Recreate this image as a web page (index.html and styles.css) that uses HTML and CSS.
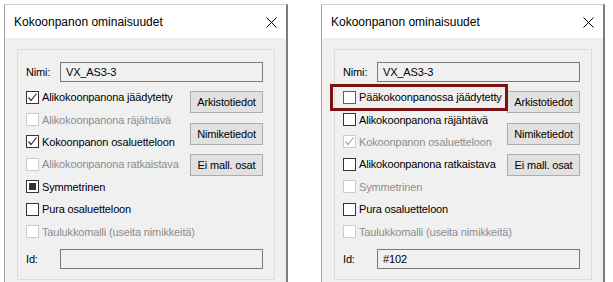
FILE: index.html
```html
<!DOCTYPE html>
<html lang="fi">
<head>
    <meta charset="UTF-8">
    <title>Kokoonpanon ominaisuudet</title>
    <link rel="stylesheet" href="styles.css">
</head>
<body>
    <div class="dialog">
        <div class="titlebar">
            <span class="title">Kokoonpanon ominaisuudet</span>
            <svg class="close" width="11" height="11" viewBox="0 0 11 11"><path d="M0.5 0.5 L10.5 10.5 M10.5 0.5 L0.5 10.5" stroke="#000" stroke-width="1"/></svg>
        </div>
        <div class="dialog-body">
            <div class="group">
                <div class="field-row">
                    <span class="field-label">Nimi:</span>
                    <div class="field">VX_AS3-3</div>
                </div>
                <div class="main">
                    <div class="checks">
                        <div class="check-row"><span class="box checked"><svg width="11" height="11" viewBox="0 0 11 11"><path d="M1.5 5.5 L4 8.5 L9.5 1.5" fill="none" stroke="#333" stroke-width="1.2"/></svg></span>Alikokoonpanona jäädytetty</div>
                        <div class="check-row disabled"><span class="box"></span>Alikokoonpanona räjähtävä</div>
                        <div class="check-row"><span class="box checked"><svg width="11" height="11" viewBox="0 0 11 11"><path d="M1.5 5.5 L4 8.5 L9.5 1.5" fill="none" stroke="#333" stroke-width="1.2"/></svg></span>Kokoonpanon osaluetteloon</div>
                        <div class="check-row disabled"><span class="box"></span>Alikokoonpanona ratkaistava</div>
                        <div class="check-row"><span class="box mixed"><span class="fill"></span></span>Symmetrinen</div>
                        <div class="check-row"><span class="box"></span>Pura osaluetteloon</div>
                        <div class="check-row disabled"><span class="box"></span>Taulukkomalli (useita nimikkeitä)</div>
                    </div>
                    <div class="buttons">
                        <div class="btn">Arkistotiedot</div>
                        <div class="btn">Nimiketiedot</div>
                        <div class="btn">Ei mall. osat</div>
                    </div>
                </div>
                <div class="field-row id-row">
                    <span class="field-label">Id:</span>
                    <div class="field"></div>
                </div>
            </div>
        </div>
    </div>

    <div class="dialog">
        <div class="titlebar">
            <span class="title">Kokoonpanon ominaisuudet</span>
            <svg class="close" width="11" height="11" viewBox="0 0 11 11"><path d="M0.5 0.5 L10.5 10.5 M10.5 0.5 L0.5 10.5" stroke="#000" stroke-width="1"/></svg>
        </div>
        <div class="dialog-body">
            <div class="group">
                <div class="field-row">
                    <span class="field-label">Nimi:</span>
                    <div class="field">VX_AS3-3</div>
                </div>
                <div class="main">
                    <div class="checks">
                        <div class="check-row"><span class="box hover"></span>Pääkokoonpanossa jäädytetty<span class="highlight"></span></div>
                        <div class="check-row"><span class="box"></span>Alikokoonpanona räjähtävä</div>
                        <div class="check-row disabled"><span class="box checked"><svg width="11" height="11" viewBox="0 0 11 11"><path d="M1.5 5.5 L4 8.5 L9.5 1.5" fill="none" stroke="#a8a8a8" stroke-width="1.2"/></svg></span>Kokoonpanon osaluetteloon</div>
                        <div class="check-row"><span class="box"></span>Alikokoonpanona ratkaistava</div>
                        <div class="check-row disabled"><span class="box"></span>Symmetrinen</div>
                        <div class="check-row"><span class="box"></span>Pura osaluetteloon</div>
                        <div class="check-row disabled"><span class="box"></span>Taulukkomalli (useita nimikkeitä)</div>
                    </div>
                    <div class="buttons">
                        <div class="btn">Arkistotiedot</div>
                        <div class="btn">Nimiketiedot</div>
                        <div class="btn">Ei mall. osat</div>
                    </div>
                </div>
                <div class="field-row id-row">
                    <span class="field-label">Id:</span>
                    <div class="field">#102</div>
                </div>
            </div>
        </div>
    </div>
</body>
</html>
```

FILE: styles.css
```css
* {
    margin: 0;
    padding: 0;
    box-sizing: border-box;
}

body {
    background: #fff;
    font-family: "Liberation Sans", Arial, sans-serif;
    font-size: 11px;
    letter-spacing: -0.15px;
    color: #000;
    display: flex;
    gap: 33px;
    padding: 4px 0 0 4px;
    overflow: hidden;
    height: 282px;
}

.dialog {
    width: 284px;
    height: 300px;
    flex-shrink: 0;
    border-top: 1px solid #cfcfcf;
    border-left: 1px solid #a0a0a0;
    border-right: 2px solid #7c7c7c;
    background: #f0f0f0;
}

.titlebar {
    height: 33px;
    background: #fff;
    display: flex;
    align-items: center;
    justify-content: space-between;
    padding: 0 9px 0 9px;
}

.title {
    font-size: 12px;
    letter-spacing: 0;
    padding-top: 1px;
}

.close {
    display: block;
    margin-top: 1px;
}

.dialog-body {
    padding: 11px 11px 0 12px;
}

.group {
    border: 1px solid #dcdcdc;
    padding: 12px 11px 10px 8px;
}

.field-row {
    display: flex;
    align-items: center;
}

.field-label {
    width: 34px;
}

.field {
    width: 203px;
    height: 20px;
    border: 1px solid #7a7a7a;
    background: #f0f0f0;
    padding: 3px 5px 0;
}

.main {
    display: flex;
    margin-top: 4px;
}

.checks {
    flex: 1;
    min-width: 0;
}

.check-row {
    height: 22.4px;
    display: flex;
    align-items: center;
    position: relative;
    white-space: nowrap;
}

.check-row.disabled {
    color: #8d8d8d;
}

.box {
    width: 13px;
    height: 13px;
    flex-shrink: 0;
    border: 1px solid #333;
    background: #fff;
    margin-right: 3px;
    display: flex;
    align-items: center;
    justify-content: center;
}

.disabled .box {
    border-color: #cccccc;
    background: #fff;
}

.box.hover {
    border-color: #0078d7;
}

.box.mixed .fill {
    width: 7px;
    height: 7px;
    background: #333;
}

.box svg {
    display: block;
}

.highlight {
    position: absolute;
    left: -13px;
    top: -2px;
    width: 178px;
    height: 27px;
    border: 3px solid #7d1010;
}

.buttons {
    width: 73px;
    flex-shrink: 0;
    padding-top: 5px;
    display: flex;
    flex-direction: column;
    gap: 9.5px;
}

.btn {
    height: 22px;
    border: 1px solid #adadad;
    background: #e1e1e1;
    display: flex;
    align-items: center;
    justify-content: center;
}

.id-row {
    margin-top: 6px;
}
```
